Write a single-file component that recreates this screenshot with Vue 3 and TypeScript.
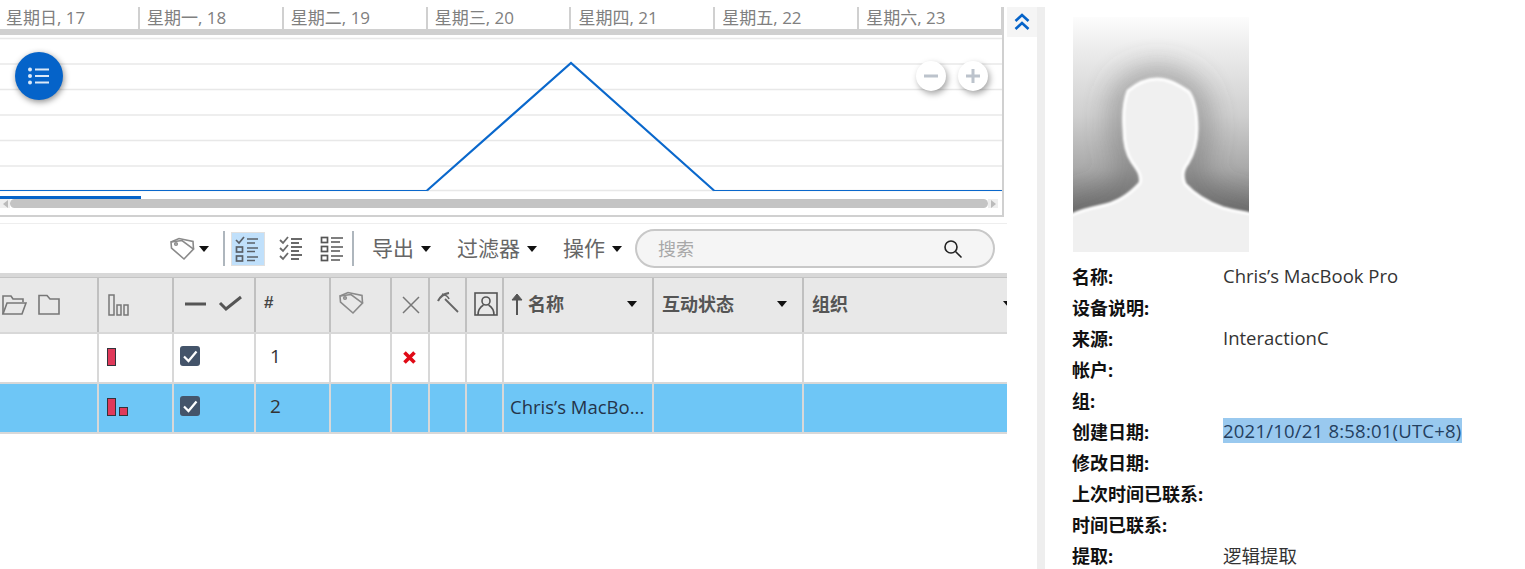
<script setup lang="ts">
const days = ['星期日, 17', '星期一, 18', '星期二, 19', '星期三, 20', '星期四, 21', '星期五, 22', '星期六, 23']
const grid = [3.5, 29, 54.5, 80, 105.5, 131, 155.5]
const info: [string, string][] = [
  ['名称:', 'Chris’s MacBook Pro'],
  ['设备说明:', ''],
  ['来源:', 'InteractionC'],
  ['帐户:', ''],
  ['组:', ''],
  ['创建日期:', '2021/10/21 8:58:01(UTC+8)'],
  ['修改日期:', ''],
  ['上次时间已联系:', ''],
  ['时间已联系:', ''],
  ['提取:', '逻辑提取'],
]
const menus = ['导出', '过滤器', '操作']
const silhouette =
  'M-6 200 C8 193 18 191 28 189 C44 186 58 176 67 166 C69 158 64 152 59 145 C53 136 51 125 51 112 C50 98 51 84 55 74 C62 68 72 62 84 62 C96 62 106 68 116 75 C122 84 124 98 124 112 C124 126 121 136 115 146 C110 152 109 160 112 167 C122 178 136 186 150 191 C160 194 170 195 182 198 L182 241 L-6 241 Z'
</script>

<template>
  <div class="page">
    <section class="main">
      <div class="chart">
        <div class="days">
          <div v-for="d in days" :key="d" class="day">{{ d }}</div>
        </div>
        <div class="plot">
          <svg class="plot-svg" width="1002" height="164" viewBox="0 0 1002 164">
            <line v-for="y in grid" :key="y" x1="0" x2="1002" :y1="y" :y2="y" stroke="#e8e8e8" stroke-width="1.6" />
            <path d="M0 155.5H427M714 155.5H1002" fill="none" stroke="#0a68cc" stroke-width="1.2" />
            <polyline points="427,155.5 571,28 714,155.5" fill="none" stroke="#0a68cc" stroke-width="2.2" />
            <rect x="0" y="161" width="141" height="3" fill="#0563c9" />
          </svg>
          <button class="fab" aria-label="list">
            <svg width="24" height="20" viewBox="0 0 24 20">
              <g fill="#dce9f8">
                <circle cx="3" cy="3.5" r="2" /><circle cx="3" cy="10" r="2" /><circle cx="3" cy="16.5" r="2" />
                <rect x="8" y="2.5" width="14" height="2" /><rect x="8" y="9" width="14" height="2" /><rect x="8" y="15.5" width="14" height="2" />
              </g>
            </svg>
          </button>
          <div class="zooms">
            <button class="zoom" aria-label="zoom out">
              <svg width="18" height="18" viewBox="0 0 18 18"><rect x="2" y="7.5" width="14" height="3" fill="#bcc3cc" /></svg>
            </button>
            <button class="zoom" aria-label="zoom in">
              <svg width="18" height="18" viewBox="0 0 18 18"><path d="M2 9H16M9 2V16" stroke="#bcc3cc" stroke-width="3" /></svg>
            </button>
          </div>
        </div>
        <div class="scroll">
          <div class="sb-btn"><i class="arrow-l"></i></div>
          <div class="sb-thumb"></div>
          <div class="sb-btn"><i class="arrow-r"></i></div>
        </div>
      </div>

      <div class="toolbar">
        <svg class="tb-tag" width="25" height="24" viewBox="0 0 25 24" fill="none" stroke="#8a8a8a" stroke-width="1.6">
          <path d="M1 5 L9 1.5 L23 4.5 L23.5 12" />
          <path d="M1 5 L1.5 11 L14 22 L23.5 12 L12 3.5 Z" />
          <circle cx="6" cy="7" r="1.3" />
        </svg>
        <i class="caret tb-c1"></i>
        <span class="tb-sep s1"></span>
        <button class="view active" aria-label="view 1">
          <svg width="26" height="26" viewBox="0 0 26 26" fill="none" stroke="#5a6068" stroke-width="1.7">
            <path d="M1 4 L4 7 L9 1" /><path d="M12 3H23M12 7H20" />
            <rect x="1.5" y="11" width="6" height="5" /><path d="M12 12H23M12 15.5H20" />
            <rect x="1.5" y="20" width="6" height="5" /><path d="M12 21H23M12 24.5H20" />
          </svg>
        </button>
        <svg class="view-icon v2" width="24" height="26" viewBox="0 0 24 26" fill="none" stroke="#6a6a6a" stroke-width="1.8">
          <path d="M1 4 L4 7 L9 1" /><path d="M12 3H23M12 7H20" />
          <path d="M1 12 L4 15 L9 9" /><path d="M12 11H23M12 15H20" />
          <path d="M1 20 L4 23 L9 17" /><path d="M12 19H23M12 23H20" />
        </svg>
        <svg class="view-icon v3" width="24" height="26" viewBox="0 0 24 26" fill="none" stroke="#555" stroke-width="1.7">
          <rect x="1.5" y="1.5" width="6" height="5" /><path d="M11 2H23M11 6H20" />
          <rect x="1.5" y="10.5" width="6" height="5" /><path d="M11 11H23M11 15H20" />
          <rect x="1.5" y="19.5" width="6" height="5" /><path d="M11 20H23M11 24H20" />
        </svg>
        <span class="tb-sep s2"></span>
        <div v-for="m in menus" :key="m" class="menu"><span class="menu-text">{{ m }}</span><i class="caret"></i></div>
        <div class="search">
          <span class="placeholder">搜索</span>
          <svg width="20" height="20" viewBox="0 0 20 20" fill="none" stroke="#222" stroke-width="1.6">
            <circle cx="8" cy="8" r="6" /><path d="M12.5 12.5 L18.5 18.5" />
          </svg>
        </div>
      </div>

      <div class="thead-gap"></div>
      <div class="row head">
        <div class="cell first">
          <svg width="26" height="22" viewBox="0 0 26 22" fill="none" stroke="#777" stroke-width="1.6">
            <path d="M2 20 V2 H10 L12 5 H22 V8" /><path d="M2 20 L6 9 H25 L21 20 Z" />
          </svg>
          <svg class="folder" width="22" height="22" viewBox="0 0 22 22" fill="none" stroke="#777" stroke-width="1.6">
            <path d="M1 20 V1.5 H9 L12 5 H21 V20 Z" />
          </svg>
        </div>
        <div class="cell">
          <svg class="ic-bars" width="22" height="22" viewBox="0 0 22 22" fill="none" stroke="#777" stroke-width="1.5">
            <rect x="1" y="1" width="5" height="20" /><rect x="9" y="11" width="4" height="10" /><rect x="16" y="11" width="4" height="10" />
          </svg>
        </div>
        <div class="cell">
          <svg class="ic-check" width="58" height="16" viewBox="0 0 58 16" fill="none" stroke="#555">
            <path d="M0 9H21" stroke-width="3" /><path d="M35 8 L41 14 L56 2" stroke-width="3" />
          </svg>
        </div>
        <div class="cell hash">#</div>
        <div class="cell">
          <svg class="ic-tag" width="25" height="24" viewBox="0 0 25 24" fill="none" stroke="#8a8a8a" stroke-width="1.6">
            <path d="M1 5 L9 1.5 L23 4.5 L23.5 12" />
            <path d="M1 5 L1.5 11 L14 22 L23.5 12 L12 3.5 Z" />
            <circle cx="6" cy="7" r="1.3" />
          </svg>
        </div>
        <div class="cell">
          <svg class="ic-x" width="18" height="18" viewBox="0 0 18 18" stroke="#777" stroke-width="1.5"><path d="M1 1 L17 17 M17 1 L1 17" /></svg>
        </div>
        <div class="cell">
          <svg class="ic-pick" width="22" height="22" viewBox="0 0 22 22" fill="none" stroke="#666">
            <path d="M8 7 L21 20" stroke-width="1.8" /><path d="M1 9 C3 5 6 2 12 1" stroke-width="2.2" /><path d="M5 2 C9 3 11 4 12 7" stroke-width="1.6" />
          </svg>
        </div>
        <div class="cell">
          <svg class="ic-user" width="24" height="24" viewBox="0 0 24 24" fill="none" stroke="#555" stroke-width="1.6">
            <rect x="1" y="1" width="22" height="22" />
            <circle cx="12" cy="9" r="4" /><path d="M4 23 C4 17 7 14.5 9.5 13 M20 23 C20 17 17 14.5 14.5 13" />
          </svg>
        </div>
        <div class="cell col-title has-sort">
          <svg class="ic-up" width="12" height="23" viewBox="0 0 12 23" fill="none" stroke="#555" stroke-width="2"><path d="M6 23 V3" /><path d="M1 8 L6 2 L11 8 Z" fill="#555" stroke-width="1" /></svg>
          <span>名称</span><i class="caret"></i>
        </div>
        <div class="cell col-title"><span>互动状态</span><i class="caret"></i></div>
        <div class="cell col-title"><span>组织</span><i class="caret"></i></div>
      </div>

      <div class="row body">
        <div class="cell first"></div>
        <div class="cell bars"><i class="bar tall"></i></div>
        <div class="cell"><span class="checkbox"><svg width="20" height="20" viewBox="0 0 20 20" fill="none" stroke="#fff" stroke-width="2.2"><path d="M4 10.5 L8.5 15 L16.5 5.5" /></svg></span></div>
        <div class="cell num">1</div>
        <div class="cell"></div>
        <div class="cell">
          <svg class="ic-del" width="13" height="13" viewBox="0 0 13 13" stroke="#e00a16" stroke-width="3.6"><path d="M1.5 1.5 L11.5 11.5 M11.5 1.5 L1.5 11.5" /></svg>
        </div>
        <div class="cell"></div>
        <div class="cell"></div>
        <div class="cell"></div>
        <div class="cell"></div>
        <div class="cell"></div>
      </div>

      <div class="row body selected">
        <div class="cell first"></div>
        <div class="cell bars"><i class="bar tall"></i><i class="bar short"></i></div>
        <div class="cell"><span class="checkbox"><svg width="20" height="20" viewBox="0 0 20 20" fill="none" stroke="#fff" stroke-width="2.2"><path d="M4 10.5 L8.5 15 L16.5 5.5" /></svg></span></div>
        <div class="cell num">2</div>
        <div class="cell"></div>
        <div class="cell"></div>
        <div class="cell"></div>
        <div class="cell"></div>
        <div class="cell name">Chris’s MacBo...</div>
        <div class="cell"></div>
        <div class="cell"></div>
      </div>
    </section>

    <aside class="rail">
      <button class="collapse" aria-label="collapse">
        <svg width="16" height="18" viewBox="0 0 16 18" fill="none" stroke="#0563c9" stroke-width="2.6">
          <path d="M1.5 8 L8 2 L14.5 8" /><path d="M1.5 16 L8 10 L14.5 16" />
        </svg>
      </button>
    </aside>
    <div class="divider"></div>

    <aside class="details">
      <svg class="photo" width="176" height="235" viewBox="0 0 176 235">
        <defs>
          <linearGradient id="bg" x1="0" y1="0" x2="0" y2="1">
            <stop offset="0" stop-color="#fcfcfc" />
            <stop offset="0.14" stop-color="#ececec" />
            <stop offset="0.42" stop-color="#cfcfcf" />
            <stop offset="0.65" stop-color="#a8a8a8" />
            <stop offset="0.85" stop-color="#6f6f6f" />
          </linearGradient>
          <filter id="halo" x="-40%" y="-40%" width="180%" height="180%"><feGaussianBlur stdDeviation="16" /></filter>
          <filter id="soft" x="-10%" y="-10%" width="120%" height="120%"><feGaussianBlur stdDeviation="0.9" /></filter>
          <clipPath id="clip"><rect width="176" height="235" /></clipPath>
        </defs>
        <g clip-path="url(#clip)">
          <rect width="176" height="235" fill="url(#bg)" />
          <path :d="silhouette" fill="none" stroke="#555" stroke-width="14" filter="url(#halo)" opacity="0.85" />
          <path :d="silhouette" fill="#f0f0f0" stroke="#fff" stroke-width="3" filter="url(#soft)" />
        </g>
      </svg>
      <dl class="info">
        <div v-for="[k, v] in info" :key="k" class="info-row">
          <dt>{{ k }}</dt>
          <dd><span :class="{ picked: k === '创建日期:' }">{{ v }}</span></dd>
        </div>
      </dl>
    </aside>
  </div>
</template>

<style scoped>
.page {
  display: flex;
  width: 1525px;
  height: 569px;
  overflow: hidden;
  background: #fff;
  font-family: "Open Sans", "Noto Sans CJK SC", sans-serif;
}
button { padding: 0; border: 0; display: flex; align-items: center; justify-content: center; }
i { display: block; }

.main { width: 1007px; flex: none; padding-top: 7px; overflow: hidden; }
.chart {
  width: 1004px;
  height: 210px;
  box-sizing: border-box;
  border-right: 2px solid #d0d0d0;
  border-bottom: 2px solid #d0d0d0;
}
.days { display: flex; height: 22px; border-bottom: 6px solid #d0d0d0; }
.day {
  flex: none;
  width: 143.83px;
  box-sizing: border-box;
  padding-left: 7px;
  border-right: 2px solid #d0d0d0;
  color: #808080;
  font-size: 17px;
  line-height: 22px;
  white-space: nowrap;
}
.day:first-child { width: 140px; padding-left: 6px; }
.plot { position: relative; height: 164px; }
.plot-svg { display: block; }
.fab {
  position: absolute;
  left: 15px;
  top: 17px;
  width: 48px;
  height: 48px;
  border-radius: 50%;
  background: #0563c9;
  box-shadow: 1px 2px 6px rgba(0, 0, 0, 0.45);
}
.zooms { position: absolute; left: 916px; top: 26px; display: flex; gap: 12px; }
.zoom {
  width: 30px;
  height: 30px;
  border-radius: 50%;
  background: #fff;
  box-shadow: 2px 3px 6px rgba(0, 0, 0, 0.35);
}
.scroll { display: flex; height: 9px; align-items: stretch; }
.sb-btn { width: 10px; flex: none; background: #eee; display: flex; align-items: center; justify-content: center; }
.sb-thumb { width: 978px; flex: none; background: #c4c4c4; border-radius: 5px; }
.arrow-l { border: 4px solid transparent; border-left: 0; border-right: 5px solid #bbb; }
.arrow-r { border: 4px solid transparent; border-right: 0; border-left: 5px solid #bbb; }

.toolbar {
  margin-top: 6px;
  height: 49px;
  border-top: 1px solid #eee;
  display: flex;
  align-items: center;
  padding-left: 170px;
}
.tb-tag { flex: none; }
.caret {
  flex: none;
  width: 0;
  height: 0;
  border-left: 5.5px solid transparent;
  border-right: 5.5px solid transparent;
  border-top: 6px solid #111;
}
.tb-c1 { margin-left: 4px; }
.tb-sep { flex: none; width: 2px; height: 35px; background: #aeb6bd; }
.s1 { margin-left: 14px; }
.view {
  width: 34px;
  height: 34px;
  margin-left: 6px;
  background: #c0e0fb;
  border: 1px solid #e0e0e0;
  box-sizing: border-box;
}
.view-icon { flex: none; }
.v2 { margin-left: 14px; }
.v3 { margin-left: 17px; }
.s2 { margin-left: 8px; margin-right: 18px; }
.menu {
  flex: none;
  display: flex;
  align-items: center;
  gap: 7px;
  margin-right: 26px;
  color: #666;
  font-size: 21px;
  white-space: nowrap;
}
.menu-text { margin-top: -3px; }
.search {
  flex: none;
  width: 360px;
  height: 39px;
  margin-left: -13px;
  box-sizing: border-box;
  border: 2px solid #c8c8c8;
  border-radius: 20px;
  background: #f5f5f5;
  display: flex;
  align-items: center;
  justify-content: space-between;
  padding: 0 30px 0 21px;
}
.placeholder { color: #a8a8a8; font-size: 18px; margin-top: -2px; }

.thead-gap { height: 4px; background: #d8d8d8; border-bottom: 1px solid #c4c4c4; }
.row {
  display: grid;
  grid-template-columns: 97px 75px 82px 75px 61px 38px 37px 37px 150px 150px 226px;
  width: 1028px;
}
.cell {
  box-sizing: border-box;
  border-left: 2px solid #d8d8d8;
  display: flex;
  align-items: center;
  min-width: 0;
}
.first { border-left: 0; }
.head { height: 56px; background: #e8e8e8; border-bottom: 2px solid #d8d8d8; box-sizing: border-box; }
.head .cell { border-left-color: #c0c0c0; color: #555; }
.body { height: 50px; border-bottom: 2px solid #d8d8d8; box-sizing: border-box; }
.selected { background: #6ec6f6; }
.folder { margin-left: 11px; }
.ic-bars { margin-left: 9px; }
.ic-check { margin-left: 11px; margin-top: -4px; }
.hash { padding-left: 8px; font: bold 17px "Liberation Sans", sans-serif; padding-bottom: 5px; }
.head .hash { color: #444; }
.ic-tag { margin-left: 8px; margin-top: -4px; }
.ic-x { margin-left: 10px; }
.ic-pick { margin-left: 7px; margin-top: -4px; }
.ic-user { margin-left: 7px; margin-top: -3px; }
.col-title { padding-left: 8px; padding-right: 15px; font-size: 18px; font-weight: 700; }
.has-sort { padding-left: 7px; }
.col-title span { flex: 1; white-space: nowrap; margin-top: -4px; }
.col-title .caret { margin-top: -2px; }
.ic-up { flex: none; margin-right: 5px; margin-top: -3px; }
.first svg:first-child { margin-left: 1px; }
.bars { gap: 3px; padding-left: 8px; align-items: flex-end; padding-bottom: 16px; }
.bar { box-sizing: border-box; width: 9px; background: #e0395a; border: 1.5px solid #33333b; }
.tall { height: 18px; }
.short { height: 9px; }
.checkbox {
  width: 20px;
  height: 20px;
  margin-left: 6px;
  margin-bottom: 4px;
  border-radius: 3px;
  background: #44546a;
  display: block;
}
.checkbox svg { display: block; }
.num { padding-left: 14px; font-size: 19px; color: #333; padding-bottom: 4px; }
.ic-del { margin-left: 11px; margin-bottom: 2px; }
.name { padding-left: 6px; padding-bottom: 4px; font-size: 18.5px; color: #24344a; white-space: nowrap; overflow: hidden; }

.rail { width: 30px; flex: none; padding-top: 7px; }
.collapse { width: 30px; height: 30px; background: #f5f5f5; }
.divider { width: 8px; flex: none; margin-top: 7px; background: #eee; }
.details { flex: 1; padding: 17px 0 0 28px; }
.photo { display: block; }
.info { margin: 8px 0 0; }
.info-row { display: grid; grid-template-columns: 150px 1fr; height: 31px; align-items: center; }
dt { font-size: 18px; font-weight: 700; color: #111; white-space: nowrap; margin-left: -1px; }
dd { margin: 0; font-size: 18.5px; color: #333; white-space: nowrap; }
.picked { background: #99c9ef; color: #24405f; letter-spacing: 0.22px; }
</style>
